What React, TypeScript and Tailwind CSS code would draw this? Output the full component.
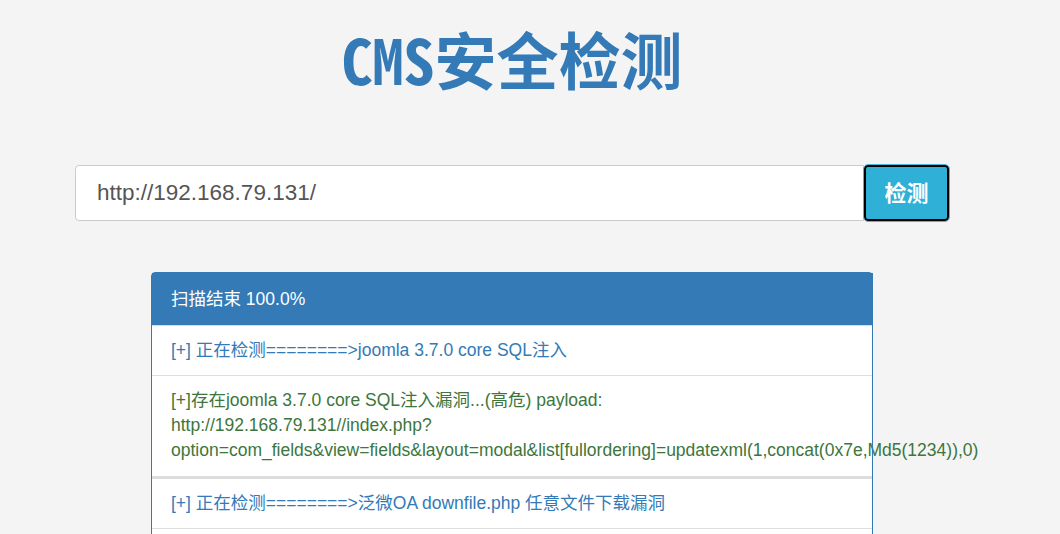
import React from 'react'

const rows = [
  {
    kind: 'info',
    lines: ['[+] 正在检测========>joomla 3.7.0 core SQL注入'],
  },
  {
    kind: 'found',
    lines: [
      '[+]存在joomla 3.7.0 core SQL注入漏洞...(高危) payload:',
      'http://192.168.79.131//index.php?',
      'option=com_fields&view=fields&layout=modal&list[fullordering]=updatexml(1,concat(0x7e,Md5(1234)),0)',
    ],
  },
  {
    kind: 'info',
    lines: ['[+] 正在检测========>泛微OA downfile.php 任意文件下载漏洞'],
  },
  {
    kind: 'info',
    lines: ['[+] 正在检测========>泛微OA e-cology 数据库配置信息泄露'],
  },
]

export default function App() {
  return (
    <div className="min-h-screen w-full bg-[#f4f4f4] font-['Liberation_Sans','Noto_Sans_CJK_SC',sans-serif]">
      <div className="flex w-[1024px] flex-col items-center">
        {/* 标题 */}
        <h1 className="pt-[24px] text-[62px] leading-[68px] font-bold text-[#337ab7] font-['Noto_Sans_Mono_CJK_SC','Noto_Sans_CJK_SC',sans-serif]">
          CMS安全检测
        </h1>

        {/* 输入框 */}
        <div className="mt-[73px] flex h-[56px] w-[874px]">
          <div className="flex flex-1 items-center rounded-l-[4px] border border-[#cccccc] bg-white pl-[21px] text-[22.5px] text-[#555555]">
            http://192.168.79.131/
          </div>
          <button
            type="button"
            className="flex w-[85px] items-center justify-center rounded-[4px] border-2 border-black bg-[#2fb0d6] text-[22px] font-bold text-white outline outline-1 outline-[#46b8da]"
          >
            检测
          </button>
        </div>

        {/* 扫描结果 */}
        <div className="relative mt-[51px] w-[722px] rounded-t-[4px] border border-[#337ab7] bg-white">
          <div className="flex h-[52px] items-center bg-[#337ab7] px-[19px] text-[17.5px] text-white">
            扫描结束 100.0%
          </div>
          {rows.map((row, i) => (
            <div
              key={i}
              className={
                'border-t border-[#dddddd] px-[19px] py-[12px] text-[17.5px] leading-[25px] whitespace-nowrap ' +
                (row.kind === 'found' ? 'border-b-2 pb-[13px] text-[#3c763d]' : 'text-[#337ab7]')
              }
            >
              {row.lines.map((l, j) => (
                <div key={j}>{l}</div>
              ))}
            </div>
          ))}
          <div className="absolute top-0 right-[-1px] bottom-0 z-10 w-px bg-[#337ab7]" />
        </div>
      </div>
    </div>
  )
}
